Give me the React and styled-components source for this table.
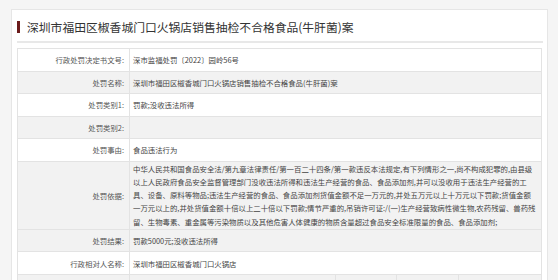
import React from 'react';
import styled, { createGlobalStyle } from 'styled-components';

const basisLines = [
  '中华人民共和国食品安全法/第九章法律责任/第一百二十四条/第一款违反本法规定,有下列情形之一,尚不构成犯罪的,由县级',
  '以上人民政府食品安全监督管理部门没收违法所得和违法生产经营的食品、食品添加剂,并可以没收用于违法生产经营的工',
  '具、设备、原料等物品;违法生产经营的食品、食品添加剂货值金额不足一万元的,并处五万元以上十万元以下罚款;货值金额',
  '一万元以上的,并处货值金额十倍以上二十倍以下罚款;情节严重的,吊销许可证:/(一)生产经营致病性微生物,农药残留、兽药残',
  '留、生物毒素、重金属等污染物质以及其他危害人体健康的物质含量超过食品安全标准限量的食品、食品添加剂;',
];

const rows = [
  { label: '行政处罚决定书文号:', value: '深市监福处罚〔2022〕园岭56号' },
  { label: '处罚名称:', value: '深圳市福田区椒香城门口火锅店销售抽检不合格食品(牛肝菌)案', shaded: true },
  { label: '处罚类别1:', value: '罚款;没收违法所得' },
  { label: '处罚类别2:', value: '', shaded: true },
  { label: '处罚事由:', value: '食品违法行为' },
  { label: '处罚依据:', lines: basisLines, shaded: true },
  { label: '处罚结果:', value: '罚款5000元;没收违法所得', shaded: true },
  { label: '行政相对人名称:', value: '深圳市福田区椒香城门口火锅店' },
];

const App = () => (
  <Page>
    <GlobalStyle />
    <Card>
      <TitleBar>
        <Mark />
        <Title>深圳市福田区椒香城门口火锅店销售抽检不合格食品(牛肝菌)案</Title>
      </TitleBar>
      <Table>
        {rows.map(({ label, value, lines, shaded }) => (
          <Row key={label} $shaded={shaded}>
            <Label>{label}</Label>
            {lines ? (
              <Value $tall>
                <Lines>
                  {lines.map((line) => (
                    <Line key={line}>{line}</Line>
                  ))}
                </Lines>
              </Value>
            ) : (
              <Value>{value}</Value>
            )}
          </Row>
        ))}
        <SplitRow $shaded>
          <Label />
          <Value />
          <Label />
          <Value />
          <Value />
        </SplitRow>
      </Table>
    </Card>
  </Page>
);

const GlobalStyle = createGlobalStyle`
  body {
    margin: 0;
    background: #f5f5f5;
    font-family: "Noto Sans CJK SC", "Noto Sans", sans-serif;
  }
`;

const Page = styled.div`
  padding: 9px 10px 0 11px;
  height: 280px;
  box-sizing: border-box;
  overflow: hidden;
`;

const Card = styled.div`
  background: #ffffff;
  border: 1px solid #e6e6e6;
  padding: 0 4px 20px 5px;
`;

const TitleBar = styled.div`
  display: flex;
  align-items: center;
  padding: 10px 0 7px;
  border-bottom: 2px solid #e8e8e8;
  margin-bottom: 5px;
`;

const Mark = styled.span`
  width: 3px;
  height: 12px;
  background: #6b1b1b;
  margin-right: 7px;
`;

const Title = styled.h1`
  margin: 0;
  font-size: 11.8px;
  line-height: 14px;
  font-weight: 400;
  color: #333333;
`;

const Table = styled.div`
  border: 1px solid #e3e3e3;
  border-bottom: none;
  margin-right: 1px;
`;

const Row = styled.div`
  display: grid;
  grid-template-columns: 112px 1fr;
  min-height: 22.5px;
  box-sizing: border-box;
  border-bottom: 1px solid #e3e3e3;
  background: ${({ $shaded }) => ($shaded ? '#f2f2f2' : '#ffffff')};
`;

const SplitRow = styled(Row)`
  grid-template-columns: 112px 206px 61px 62px 1fr;
`;

const Label = styled.div`
  display: flex;
  align-items: center;
  justify-content: flex-end;
  padding-right: 5px;
  border-right: 1px solid #e3e3e3;
  font-size: 7.4px;
  line-height: 13.3px;
  color: #555555;
  white-space: nowrap;
`;

const Value = styled.div`
  display: flex;
  align-items: center;
  min-width: 0;
  padding: ${({ $tall }) => ($tall ? '0 4px 1px 3px' : '0 4px 0 3px')};
  font-size: 7.4px;
  line-height: 13.3px;
  color: #444444;
  border-right: 1px solid #e3e3e3;
  &:last-child {
    border-right: none;
  }
`;

const Lines = styled.div`
  display: flex;
  flex-direction: column;
`;

const Line = styled.span`
  white-space: nowrap;
`;

export default App;
